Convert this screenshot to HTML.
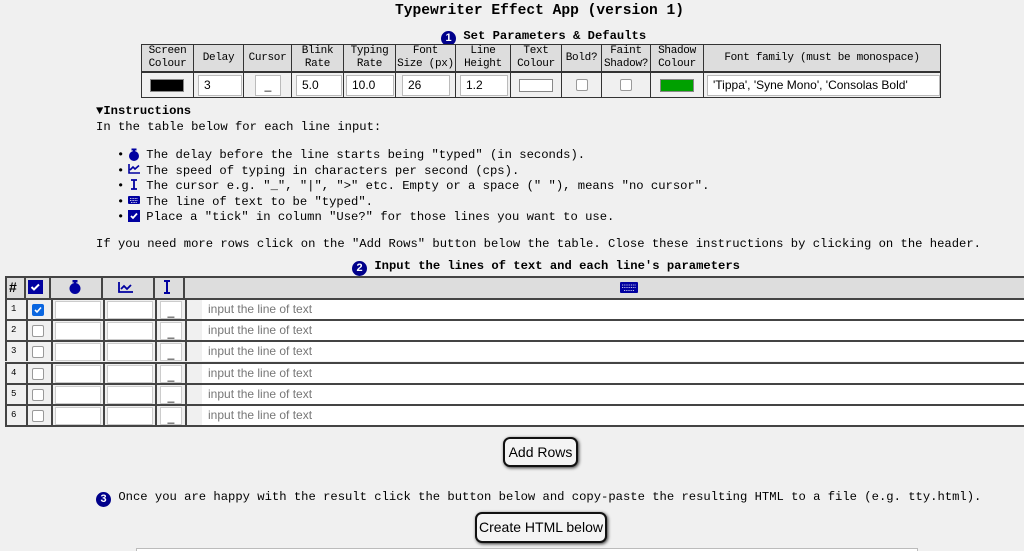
<!DOCTYPE html>
<html style="background:#f0f0f0"><head><meta charset="utf-8"><style>
*{box-sizing:border-box;margin:0;padding:0}
body{width:1024px;height:551px;overflow:hidden;background:#f0f0f0;font-family:"Liberation Mono",monospace;color:#000;position:relative}
.a{position:absolute}
.t{font-size:12.2px;white-space:pre}
.num{display:inline-block;width:15px;height:15px;border-radius:50%;background:#00008b;color:#fff;font:bold 11px "Liberation Sans",sans-serif;text-align:center;line-height:15px;vertical-align:-2px}
.hc{position:absolute;top:44px;height:28px;border:1px solid #333;background:#ddd;font-size:11px;letter-spacing:-0.3px;text-align:center;line-height:13px;display:flex;align-items:center;justify-content:center;white-space:nowrap}
.dc{position:absolute;top:72px;height:26px;border:1px solid #333;background:#f0f0f0}
.inp{position:absolute;background:#fff;border:1px solid #bbb;font:12px "Liberation Sans",sans-serif;padding-left:5px;line-height:18px}
.cb{position:absolute;width:12px;height:12px;border:1px solid #999;border-radius:2px;background:#fff}
.btn{position:absolute;border:2px solid #111;border-radius:7px;background:#f4f4f4;font:14px "Liberation Sans",sans-serif;text-align:center;box-shadow:1px 1px 3px #333}
.row{position:absolute;left:5px;width:1019px;height:21px;border-top:2px solid #444}
.lc{position:absolute;top:0;height:19px;border-left:2px solid #444}
</style></head><body>
<div class="a" style="left:395px;top:3px;font-size:14.6px;font-weight:bold;white-space:pre">Typewriter Effect App (version 1)</div>
<div class="a t" style="left:441px;top:29px;font-weight:bold"><span class="num">1</span> Set Parameters &amp; Defaults</div>

<div class="hc" style="left:141px;width:53px">Screen<br>Colour</div>
<div class="hc" style="left:193px;width:51px">Delay</div>
<div class="hc" style="left:243px;width:49px">Cursor</div>
<div class="hc" style="left:291px;width:53px">Blink<br>Rate</div>
<div class="hc" style="left:343px;width:53px">Typing<br>Rate</div>
<div class="hc" style="left:395px;width:61px">Font<br>Size (px)</div>
<div class="hc" style="left:455px;width:56px">Line<br>Height</div>
<div class="hc" style="left:510px;width:52px">Text<br>Colour</div>
<div class="hc" style="left:561px;width:41px">Bold?</div>
<div class="hc" style="left:601px;width:50px">Faint<br>Shadow?</div>
<div class="hc" style="left:650px;width:54px">Shadow<br>Colour</div>
<div class="hc" style="left:703px;width:238px">Font family (must be monospace)</div>

<div class="dc" style="left:141px;width:53px"><div class="a" style="left:8px;top:6px;width:34px;height:13px;background:#000;border:1px solid #888"></div></div>
<div class="dc" style="left:193px;width:51px"><div class="inp" style="left:4px;top:2px;width:44px;height:21px">3</div></div>
<div class="dc" style="left:243px;width:49px"><div class="inp" style="left:11px;top:2px;width:26px;height:21px;padding:0;text-align:center">_</div></div>
<div class="dc" style="left:291px;width:53px"><div class="inp" style="left:4px;top:2px;width:46px;height:21px">5.0</div></div>
<div class="dc" style="left:343px;width:53px"><div class="inp" style="left:2px;top:2px;width:48px;height:21px">10.0</div></div>
<div class="dc" style="left:395px;width:61px"><div class="inp" style="left:6px;top:2px;width:48px;height:21px">26</div></div>
<div class="dc" style="left:455px;width:56px"><div class="inp" style="left:4px;top:2px;width:48px;height:21px">1.2</div></div>
<div class="dc" style="left:510px;width:52px"><div class="a" style="left:8px;top:6px;width:34px;height:13px;background:#fff;border:1px solid #888"></div></div>
<div class="dc" style="left:561px;width:41px"><div class="cb" style="left:14px;top:6px"></div></div>
<div class="dc" style="left:601px;width:50px"><div class="cb" style="left:18px;top:6px"></div></div>
<div class="dc" style="left:650px;width:54px"><div class="a" style="left:9px;top:6px;width:34px;height:13px;background:#00a000;border:1px solid #888"></div></div>
<div class="dc" style="left:703px;width:238px"><div class="inp" style="left:3px;top:2px;width:233px;height:21px">'Tippa', 'Syne Mono', 'Consolas Bold'</div></div>

<div class="a t" style="left:96px;top:104px;font-weight:bold">▼Instructions</div>
<div class="a t" style="left:96px;top:120px">In the table below for each line input:</div>
<div class="a t" style="left:117px;top:148px;line-height:15.5px">•   The delay before the line starts being "typed" (in seconds).
•   The speed of typing in characters per second (cps).
•   The cursor e.g. "_", "|", ">" etc. Empty or a space (" "), means "no cursor".
•   The line of text to be "typed".
•   Place a "tick" in column "Use?" for those lines you want to use.</div>
<svg class="a" style="left:127px;top:147px" width="16" height="80" viewBox="0 0 16 80">
<g fill="#0000a0"><circle cx="7" cy="9" r="5"/><rect x="4.5" y="1.5" width="5" height="2"/><rect x="6" y="3" width="2" height="2"/></g>
<path d="M2 17v9h11M3 23l3-3 2 2 4-3.5" stroke="#0000a0" stroke-width="1.6" fill="none"/>
<path d="M4 33h6M4 42h6M7 33v9" stroke="#0000a0" stroke-width="1.8" fill="none"/>
<rect x="1" y="49" width="12" height="8" rx="1" fill="#0000a0"/><path d="M3 51.5h8M3 53.5h8M4 55.5h6" stroke="#fff" stroke-width=".7" stroke-dasharray="1 .6"/>
<rect x="1" y="63" width="12" height="12" fill="#0000a0"/><path d="M4 69l2 2 4-4.5" stroke="#fff" stroke-width="1.8" fill="none"/>
</svg>
<div class="a t" style="left:96px;top:237px">If you need more rows click on the "Add Rows" button below the table. Close these instructions by clicking on the header.</div>
<div class="a t" style="left:352px;top:259px;font-weight:bold"><span class="num">2</span> Input the lines of text and each line's parameters</div>

<div class="a" style="left:5px;top:276px;width:1019px;height:22px;background:#ddd;border-top:2px solid #444;border-left:2px solid #444"></div>
<div class="a" style="left:5px;top:276px;width:1019px;height:22px">
 <div class="lc" style="left:19px;height:22px"></div><div class="lc" style="left:44px;height:22px"></div><div class="lc" style="left:96px;height:22px"></div><div class="lc" style="left:148px;height:22px"></div><div class="lc" style="left:178px;height:22px"></div>
 <div class="a" style="left:4px;top:3px;font:bold 14px 'Liberation Sans',sans-serif">#</div>
</div>
<svg class="a" style="left:27px;top:279px" width="700" height="17">
<rect x="1" y="1" width="15" height="14" fill="#0000a0"/><path d="M4.5 8l2.5 2.5 5-5" stroke="#fff" stroke-width="2" fill="none"/>
<g fill="#0000a0"><circle cx="48" cy="9.5" r="5.5"/><rect x="45.5" y="1" width="5" height="2.5"/><rect x="47" y="3" width="2" height="2"/></g>
<path d="M92 3v10h14M94 10l3-3 3 3 4-4" stroke="#0000a0" stroke-width="1.8" fill="none"/>
<path d="M137 2h6M137 14h6M140 2v12" stroke="#0000a0" stroke-width="2" fill="none"/>
<rect x="593" y="3" width="18" height="11" rx="1" fill="#0000a0"/><path d="M595 6h14M595 8.5h14M597 11.5h10" stroke="#fff" stroke-width=".8" stroke-dasharray="1 .8"/>
</svg>

<div id="rows"></div>
<script>
var h='';
for(var i=0;i<6;i++){var y=298+i*21.2;
h+='<div class="row" style="top:'+y+'px;border-left:2px solid #444">'+
'<div class="lc" style="left:19px"></div><div class="lc" style="left:44px"></div><div class="lc" style="left:96px"></div><div class="lc" style="left:148px"></div><div class="lc" style="left:178px"></div>'+
'<div class="a" style="left:4px;top:4px;font-size:9px;font-family:\'Liberation Mono\'">'+(i+1)+'</div>'+
(i==0?'<div class="cb" style="left:25px;top:4px;background:#0a66e0;border-color:#0a66e0"><svg width="10" height="10" style="position:absolute;left:0;top:0"><path d="M2 5l2 2 4-4.5" stroke="#fff" stroke-width="1.6" fill="none"/></svg></div>':'<div class="cb" style="left:25px;top:4px"></div>')+
'<div class="a" style="left:48px;top:1px;width:46px;height:18px;background:#fff;border:1px solid #ccc"></div>'+
'<div class="a" style="left:100px;top:1px;width:46px;height:18px;background:#fff;border:1px solid #ccc"></div>'+
'<div class="a" style="left:153px;top:1px;width:22px;height:18px;background:#fff;border:1px solid #ccc;font:12px \'Liberation Sans\';text-align:center;line-height:18px">_</div>'+
'<div class="a" style="left:195px;top:0px;width:830px;height:19px;background:#fff;font:12px \'Liberation Sans\',sans-serif;color:#777;padding-left:6px;line-height:18px">input the line of text</div>'+
'</div>';}
h+='<div class="a" style="left:5px;top:425px;width:1019px;border-top:2px solid #444"></div>';
document.getElementById('rows').innerHTML=h;
</script>

<div class="btn" style="left:503px;top:437px;width:75px;height:30px;line-height:26px">Add Rows</div>
<div class="a t" style="left:96px;top:490px"><span class="num">3</span> Once you are happy with the result click the button below and copy-paste the resulting HTML to a file (e.g. tty.html).</div>
<div class="btn" style="left:475px;top:512px;width:132px;height:31px;line-height:27px">Create HTML below</div>
<div class="a" style="left:136px;top:548px;width:782px;height:3px;border:1px solid #bbb;border-bottom:0;background:#fff"></div>
</body></html>
